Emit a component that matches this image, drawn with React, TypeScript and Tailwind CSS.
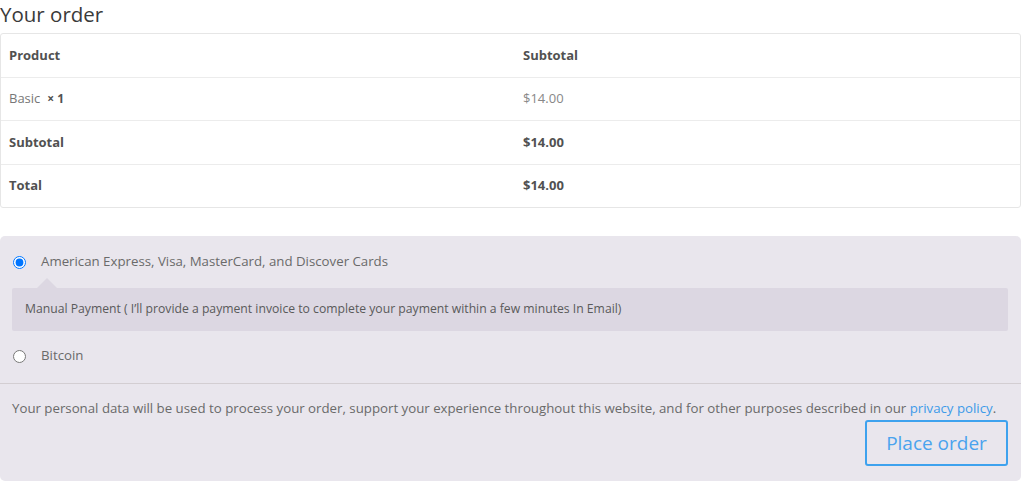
import React from 'react';

const rows = [
  { label: 'Basic', qty: '× 1', value: '$14.00', bold: false, h: 'h-[43px]' },
  { label: 'Subtotal', value: '$14.00', bold: true, h: 'h-[44px]' },
  { label: 'Total', value: '$14.00', bold: true, h: 'h-[43px]' },
];

const PaymentOption: React.FC<{ label: string; checked?: boolean }> = ({ label, checked }) => (
  <label className="flex items-center h-[20px] pl-[13px] gap-[15px] text-[13.25px] text-[#6a6a6a]">
    <input type="radio" name="payment" defaultChecked={checked} className="m-0 w-[13px] h-[13px]" />
    <span>{label}</span>
  </label>
);

export default function App() {
  return (
    <div className="bg-white w-[1024px] h-[484px] overflow-hidden" style={{ fontFamily: '"Open Sans", "Liberation Sans", sans-serif' }}>
      <h3 className="text-[20.5px] leading-[28px] text-[#3a3a3a] font-normal h-[33px]">Your order</h3>

      <div className="w-[1021px] border border-[#e6e6e6] rounded-[3px] text-[13px]">
        <div className="flex h-[43px] items-center font-bold text-[#515151]">
          <div className="w-[514px] pl-[8px]">Product</div>
          <div className="flex-1 pl-[8px]">Subtotal</div>
        </div>
        {rows.map((r) => (
          <div key={r.label} className={`flex ${r.h} items-center border-t border-[#ececec]`}>
            <div className={`w-[514px] pl-[8px] ${r.bold ? 'font-bold text-[#515151]' : 'text-[#777]'}`}>
              {r.label}
              {r.qty && <span className="font-bold text-[#515151] text-[12px] ml-[7px]">{r.qty}</span>}
            </div>
            <div className={`flex-1 pl-[8px] ${r.bold ? 'font-bold text-[#515151]' : 'text-[#888]'}`}>{r.value}</div>
          </div>
        ))}
      </div>

      <div className="mt-[28px] w-[1021px] bg-[#e9e6ed] rounded-[5px] pb-[15px]">
        <div className="pt-[16px] pb-[17px] border-b border-[#d3ced2]">
          <PaymentOption label="American Express, Visa, MasterCard, and Discover Cards" checked />
          <div className="relative mt-[16px] ml-[12px] mr-[13px] h-[43px] bg-[#dcd7e2] rounded-[2px] flex items-center pl-[13px] text-[12.2px] text-[#5a5a5a]">
            <span className="absolute left-[25px] -top-[10px] w-0 h-0 border-l-[10px] border-r-[10px] border-b-[10px] border-l-transparent border-r-transparent border-b-[#dcd7e2]" />
            Manual Payment ( I’ll provide a payment invoice to complete your payment within a few minutes In Email)
          </div>
          <div className="mt-[15px]">
            <PaymentOption label="Bitcoin" />
          </div>
        </div>
        <div className="px-[12px] pt-[14px]">
          <p className="text-[13.25px] leading-[20px] text-[#6a6a6a]">
            Your personal data will be used to process your order, support your experience throughout this website, and for other purposes described in our{' '}
            <a className="text-[#3d9be9]">privacy policy</a>.
          </p>
          <div className="flex justify-end mt-[2px] pr-[1px]">
            <button className="w-[143px] h-[46px] border-2 border-[#3ea2ee] rounded-[3px] text-[19px] text-[#4aa3ee] bg-transparent">
              Place order
            </button>
          </div>
        </div>
      </div>
    </div>
  );
}
